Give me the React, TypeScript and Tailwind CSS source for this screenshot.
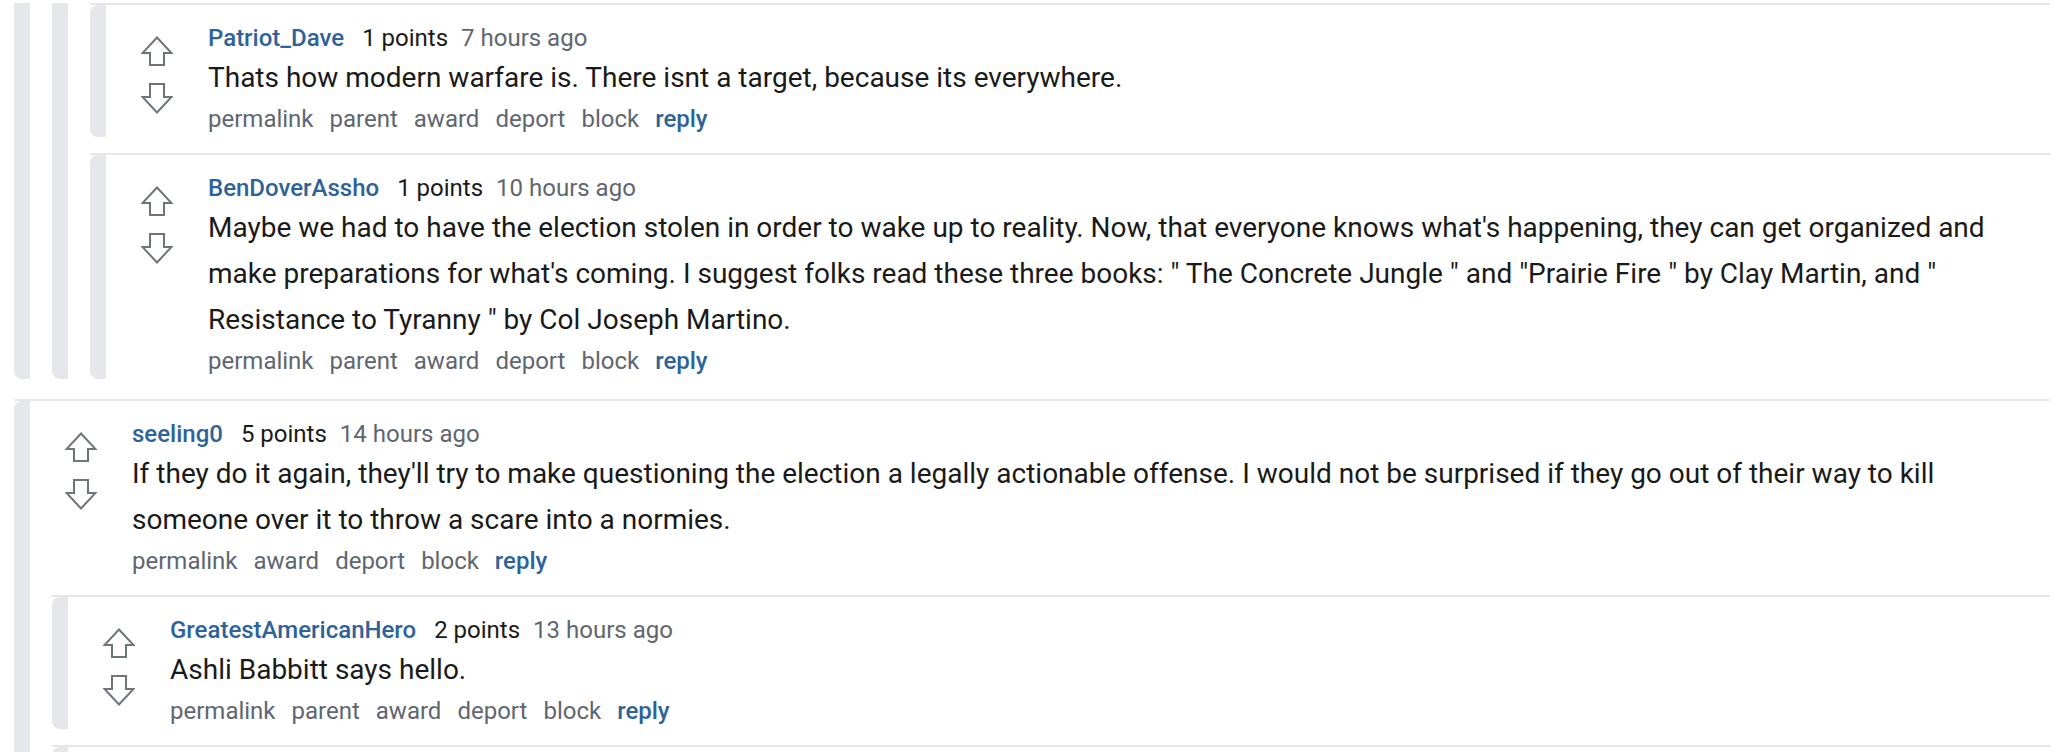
import React from "react";

type C = {
  user: string;
  points: string;
  time: string;
  lines: string[];
  parent: boolean;
};

function Up() {
  return (
    <svg width="32" height="30" viewBox="0 0 32 30" className="block">
      <path
        d="M16 1.5 L30.5 17 L23 17 L23 29 L9 29 L9 17 L1.5 17 Z"
        fill="none"
        stroke="#6f747b"
        strokeWidth="2"
        strokeLinejoin="miter"
      />
    </svg>
  );
}

function Down() {
  return (
    <svg width="32" height="31" viewBox="0 0 32 31" className="block">
      <path
        d="M9 1 L23 1 L23 14 L30.5 14 L16 29.5 L1.5 14 L9 14 Z"
        fill="none"
        stroke="#6f747b"
        strokeWidth="2"
        strokeLinejoin="miter"
      />
    </svg>
  );
}

function Body({ c }: { c: C }) {
  return (
    <div className="flex pl-[35px] pt-[16px]">
      <div className="flex w-[32px] shrink-0 flex-col gap-[17px] pt-[15px]">
        <Up />
        <Down />
      </div>
      <div className="ml-[35px] min-w-0">
        <div className="flex h-[34px] items-center whitespace-nowrap text-[24px] leading-[34px]">
          <span className="font-medium text-[#2e6399]">{c.user}</span>
          <span className="ml-[18px] text-[#1a1a1a]">{c.points}</span>
          <span className="ml-[13px] text-[#5f6670]">{c.time}</span>
        </div>
        <div className="text-[28px] leading-[46px] text-[#1a1a1a]">
          {c.lines.map((l, i) => (
            <div key={i} className="whitespace-nowrap">
              {l}
            </div>
          ))}
        </div>
        <div className="flex gap-[16px] whitespace-nowrap text-[24px] leading-[36px] text-[#5f6670]">
          <span>permalink</span>
          {c.parent && <span>parent</span>}
          <span>award</span>
          <span>deport</span>
          <span>block</span>
          <span className="font-medium text-[#2e6399]">reply</span>
        </div>
      </div>
    </div>
  );
}

function Comment({
  c,
  mt,
  children,
}: {
  c?: C;
  mt: string;
  children?: React.ReactNode;
}) {
  return (
    <div className={`${mt} border-t-2 border-[#e6e6e8]`}>
      <div className="rounded-l-[8px] border-l-[16px] border-[#e6e7eb]">
        {c ? <Body c={c} /> : <div className="h-[120px]" />}
        {children ? <div className="pl-[22px]">{children}</div> : null}
      </div>
    </div>
  );
}

function Ancestor({ children }: { children: React.ReactNode }) {
  return (
    <div className="rounded-bl-[8px] border-l-[16px] border-[#e6e7eb]">
      <div className="pl-[22px]">{children}</div>
    </div>
  );
}

const c1: C = {
  user: "Patriot_Dave",
  points: "1 points",
  time: "7 hours ago",
  lines: ["Thats how modern warfare is. There isnt a target, because its everywhere."],
  parent: true,
};

const c2: C = {
  user: "BenDoverAssho",
  points: "1 points",
  time: "10 hours ago",
  lines: [
    "Maybe we had to have the election stolen in order to wake up to reality. Now, that everyone knows what's happening, they can get organized and",
    'make preparations for what\'s coming. I suggest folks read these three books: " The Concrete Jungle " and "Prairie Fire " by Clay Martin, and "',
    'Resistance to Tyranny " by Col Joseph Martino.',
  ],
  parent: true,
};

const c3: C = {
  user: "seeling0",
  points: "5 points",
  time: "14 hours ago",
  lines: [
    "If they do it again, they'll try to make questioning the election a legally actionable offense. I would not be surprised if they go out of their way to kill",
    "someone over it to throw a scare into a normies.",
  ],
  parent: false,
};

const c4: C = {
  user: "GreatestAmericanHero",
  points: "2 points",
  time: "13 hours ago",
  lines: ["Ashli Babbitt says hello."],
  parent: true,
};

export default function App() {
  return (
    <div className="h-[752px] w-full overflow-hidden bg-white pl-[14px] pr-[6px] font-[Roboto,'Liberation_Sans',sans-serif]">
      <Ancestor>
        <Ancestor>
          <Comment c={c1} mt="mt-[3px]" />
          <Comment c={c2} mt="mt-[16px]" />
        </Ancestor>
      </Ancestor>
      <Comment c={c3} mt="mt-[20px]">
        <Comment c={c4} mt="mt-[16px]" />
        <Comment mt="mt-[16px]" />
      </Comment>
    </div>
  );
}
